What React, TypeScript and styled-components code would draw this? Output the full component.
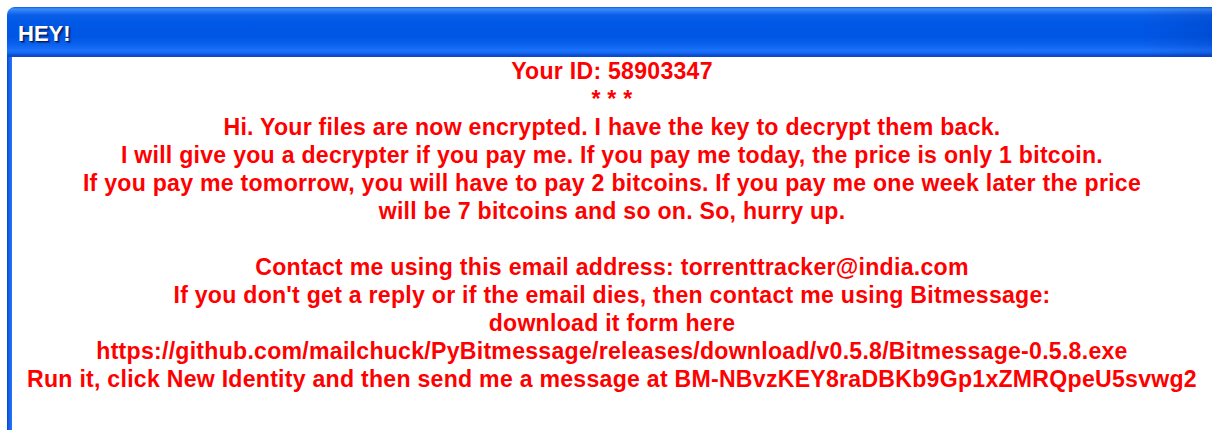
import styled, { createGlobalStyle } from 'styled-components'

const GlobalStyle = createGlobalStyle`
  html, body {
    margin: 0;
    padding: 0;
    background: #ffffff;
    overflow: hidden;
  }
`

const Desktop = styled.div`
  min-height: 100vh;
  padding: 7px 0 0 7px;
  box-sizing: border-box;
  display: flex;
  flex-direction: column;
`

const Window = styled.div`
  flex: 1;
  display: flex;
  flex-direction: column;
  border-top-left-radius: 8px;
  overflow: hidden;
`

const TitleBar = styled.div`
  height: 50px;
  display: flex;
  align-items: center;
  padding: 4px 0 0 11px;
  box-sizing: border-box;
  background:
    linear-gradient(90deg, rgba(0, 0, 0, 0) 0%, rgba(0, 0, 0, 0) 94%, rgba(0, 20, 120, 0.14) 100%),
    linear-gradient(
      180deg,
      #0a5de8 0px,
      #3d8ffb 2px,
      #2a7cf5 4px,
      #0b5fe8 8px,
      #0058e6 16px,
      #0056e4 30px,
      #0a62ee 38px,
      #1a72fb 43px,
      #1668f0 46px,
      #0a4dd0 48px,
      #0b47c4 50px
    );
`

const Caption = styled.span`
  font-family: 'Liberation Sans', Arial, sans-serif;
  font-weight: 700;
  font-size: 22px;
  color: #ffffff;
  text-shadow: 1px 1px 0 #0a1d60, 2px 2px 1px rgba(10, 29, 96, 0.6);
`

const Frame = styled.div`
  flex: 1;
  display: flex;
  background: linear-gradient(90deg, #0a3fd0 0px, #1560ea 2px, #1c6ff5 4px, #2a78f5 5px, #ffffff 5px);
  padding-left: 5px;
`

const Client = styled.div`
  flex: 1;
  background: #ffffff;
  display: flex;
  flex-direction: column;
  align-items: center;
`

const Message = styled.p`
  margin: 0;
  font-family: 'Liberation Sans', Arial, sans-serif;
  font-weight: 700;
  font-size: 23.1px;
  letter-spacing: 0.26px;
  line-height: 28px;
  color: #ff0000;
  text-align: center;
  white-space: pre;
`

const lines = [
  'Your ID: 58903347',
  '* * *',
  'Hi. Your files are now encrypted. I have the key to decrypt them back.',
  'I will give you a decrypter if you pay me. If you pay me today, the price is only 1 bitcoin.',
  'If you pay me tomorrow, you will have to pay 2 bitcoins. If you pay me one week later the price',
  'will be 7 bitcoins and so on. So, hurry up.',
  ' ',
  'Contact me using this email address: torrenttracker@india.com',
  "If you don't get a reply or if the email dies, then contact me using Bitmessage:",
  'download it form here',
  'https://github.com/mailchuck/PyBitmessage/releases/download/v0.5.8/Bitmessage-0.5.8.exe',
  'Run it, click New Identity and then send me a message at BM-NBvzKEY8raDBKb9Gp1xZMRQpeU5svwg2',
]

const App = () => {
  return (
    <>
      <GlobalStyle />
      <Desktop>
        <Window>
          <TitleBar>
            <Caption>HEY!</Caption>
          </TitleBar>
          <Frame>
            <Client>
              {lines.map((l, i) => (
                <Message key={i}>{l}</Message>
              ))}
            </Client>
          </Frame>
        </Window>
      </Desktop>
    </>
  )
}

export default App
